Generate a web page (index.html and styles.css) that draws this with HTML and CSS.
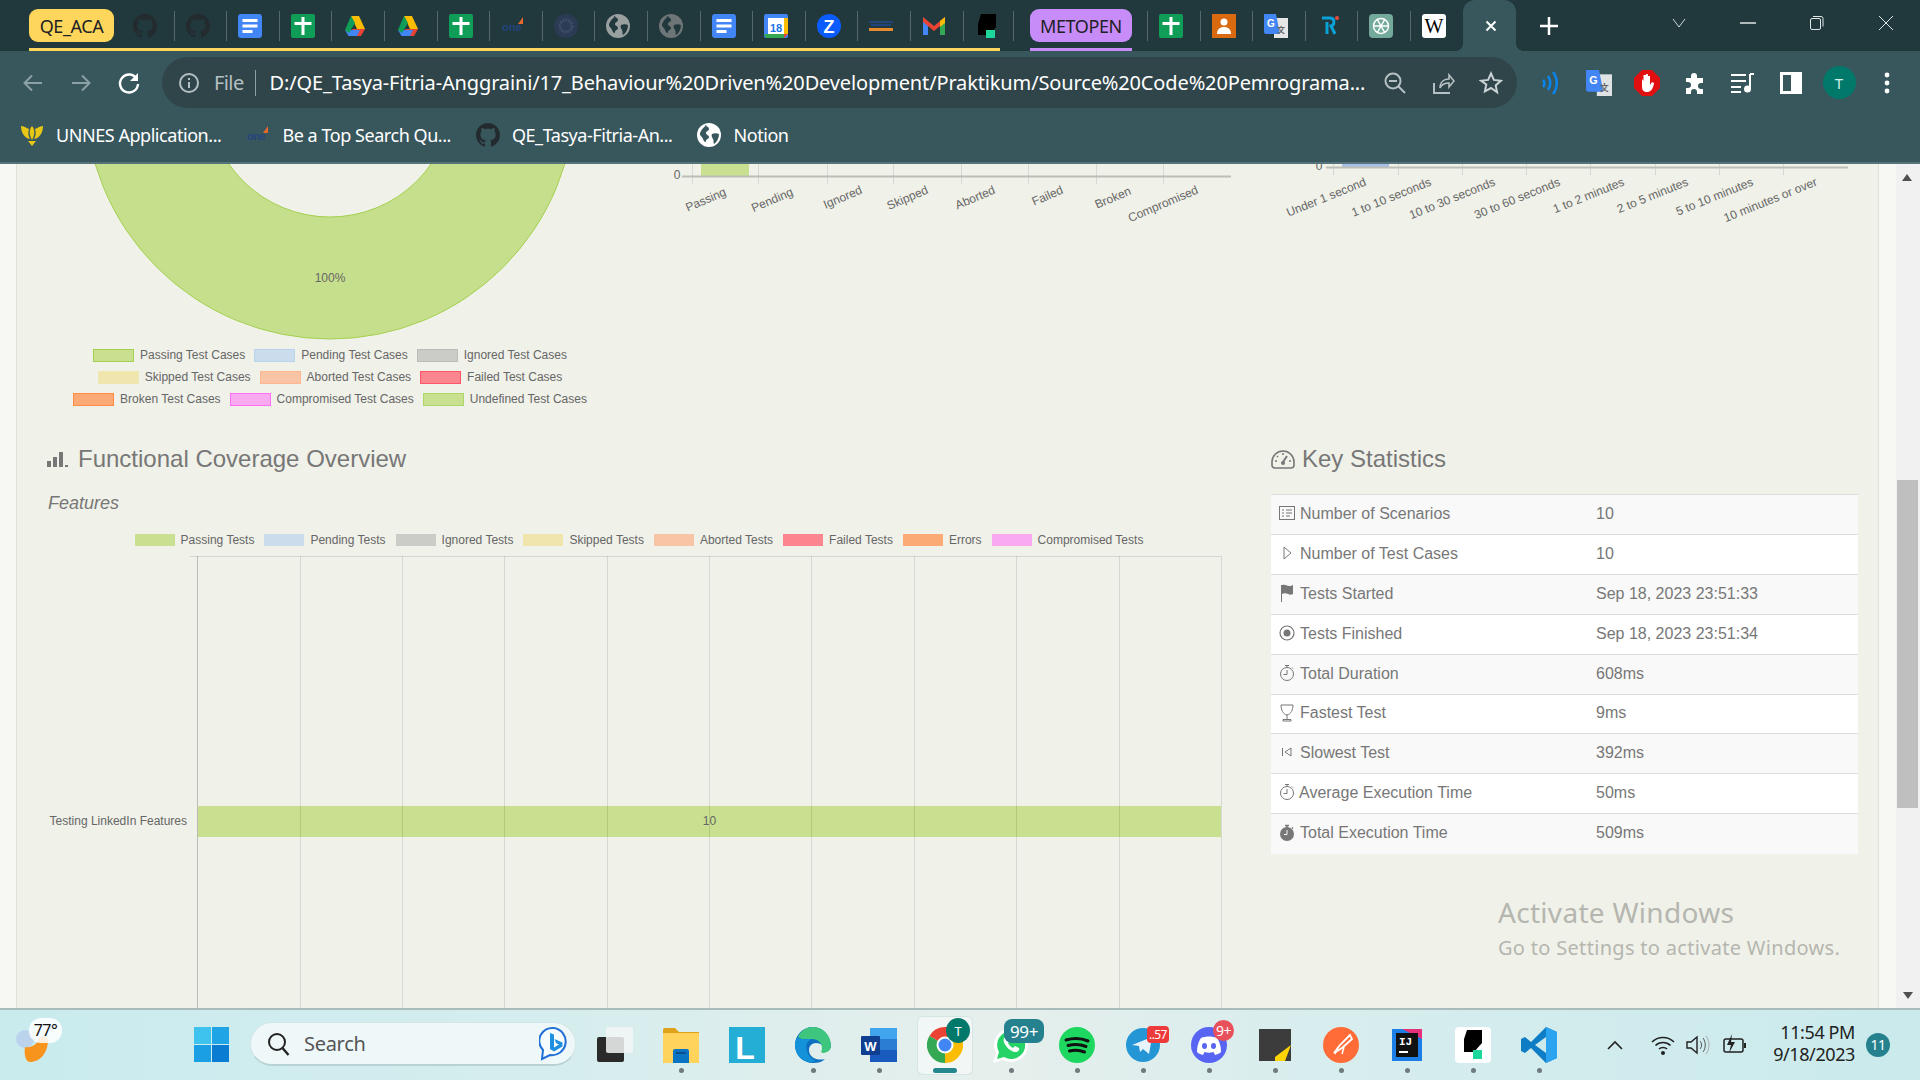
FILE: index.html
```html
<!DOCTYPE html>
<html lang="en">
<head>
<meta charset="utf-8">
<title>Serenity Reports</title>
<link rel="stylesheet" href="styles.css">
</head>
<body>
<svg class="defs" xmlns="http://www.w3.org/2000/svg">
  <symbol id="gh" viewBox="0 0 16 16"><path d="M8 0C3.58 0 0 3.58 0 8c0 3.54 2.29 6.53 5.47 7.59.4.07.55-.17.55-.38 0-.19-.01-.82-.01-1.49-2.01.37-2.53-.49-2.69-.94-.09-.23-.48-.94-.82-1.13-.28-.15-.68-.52-.01-.53.63-.01 1.08.58 1.23.82.72 1.21 1.87.87 2.33.66.07-.52.28-.87.51-1.07-1.78-.2-3.64-.89-3.64-3.95 0-.87.31-1.59.82-2.15-.08-.2-.36-1.02.08-2.12 0 0 .67-.21 2.2.82.64-.18 1.32-.27 2-.27.68 0 1.36.09 2 .27 1.53-1.04 2.2-.82 2.2-.82.44 1.1.16 1.92.08 2.12.51.56.82 1.27.82 2.15 0 3.07-1.87 3.75-3.65 3.95.29.25.54.73.54 1.48 0 1.07-.01 1.93-.01 2.2 0 .21.15.46.55.38A8.013 8.013 0 0016 8c0-4.42-3.58-8-8-8z"/></symbol>
  <symbol id="docs" viewBox="0 0 24 24"><rect width="24" height="24" rx="3" fill="#4285f4"/><rect x="4.500" y="5" width="15" height="3" fill="#fff"/><rect x="4.500" y="10.500" width="15" height="3" fill="#fff"/><rect x="4.500" y="16" width="10" height="3" fill="#fff"/></symbol>
  <symbol id="sheets" viewBox="0 0 24 24"><rect width="24" height="24" rx="2" fill="#0f9d58"/><rect x="10.500" y="3" width="3" height="18" fill="#fff"/><rect x="3.500" y="8" width="17" height="3" fill="#fff"/></symbol>
  <symbol id="drive" viewBox="0 0 24 24"><path d="M8 2h8l6 13h-8z" fill="#fbbc04"/><path d="M22 15l-4 7H6l3.500-7z" fill="#ea4335"/><path d="M2 16l3.500 6H14l3-6z" fill="#4285f4"/><path d="M8 2l4 7-6 10-4-3z" fill="#0f9d58"/></symbol>
  <symbol id="globe" viewBox="0 0 24 24"><circle cx="12" cy="12" r="12" fill="currentColor"/><path d="M7 2.500c3 .5 5 1.500 5 3.500s-3 2-3 4 3 2 3 4-3 2-3 4-2 1-3-2-3-3-3-5 3-7 7-9zM15 11c2-1 5-1 7 0 0 4-2 8-5 10-1-2 0-3-1-5s-2-3-1-5z" fill="var(--cut,#21393d)"/></symbol>
  <symbol id="oneapp" viewBox="0 0 24 24"><text x="1" y="17" class="one-text">one</text><path d="M17 10l5-7v7z" fill="#e8682c"/></symbol>
</svg>

<header class="tabstrip">
  <div class="group yellow">
    <div class="chip chip-yellow">QE_ACA</div>
    <div class="tab tab-first"><svg class="fav gh" width="24" height="24"><use href="#gh"/></svg></div>
    <div class="tab"><svg class="fav gh" width="24" height="24"><use href="#gh"/></svg></div>
    <div class="tab"><svg class="fav" width="24" height="24"><use href="#docs"/></svg></div>
    <div class="tab"><svg class="fav" width="24" height="24"><use href="#sheets"/></svg></div>
    <div class="tab"><svg class="fav" width="24" height="24"><use href="#drive"/></svg></div>
    <div class="tab"><svg class="fav" width="24" height="24"><use href="#drive"/></svg></div>
    <div class="tab"><svg class="fav" width="24" height="24"><use href="#sheets"/></svg></div>
    <div class="tab"><svg class="fav" width="24" height="24"><use href="#oneapp"/></svg></div>
    <div class="tab"><svg class="fav" width="24" height="24" viewBox="0 0 24 24"><circle cx="12" cy="12" r="12" fill="#2c3b54"/><circle cx="12" cy="12" r="6" fill="none" stroke="#3c4d6b" stroke-width="3" stroke-dasharray="2 1"/></svg></div>
    <div class="tab"><svg class="fav globe-a" width="24" height="24"><use href="#globe"/></svg></div>
    <div class="tab"><svg class="fav globe-b" width="24" height="24"><use href="#globe"/></svg></div>
    <div class="tab"><svg class="fav" width="24" height="24"><use href="#docs"/></svg></div>
    <div class="tab"><svg class="fav" width="24" height="24" viewBox="0 0 24 24"><rect width="24" height="24" rx="2" fill="#4285f4"/><rect x="4" y="4" width="16" height="16" fill="#fff"/><path d="M0 20h20v4H2z" fill="#34a853"/><path d="M20 4h4v16h-4z" fill="#fbbc04"/><path d="M20 20h4l-4 4z" fill="#ea4335"/><text x="12" y="17.500" class="cal-text">18</text></svg></div>
    <div class="tab"><svg class="fav" width="24" height="24" viewBox="0 0 24 24"><circle cx="12" cy="12" r="12" fill="#0b5cff"/><text x="12" y="19" class="z-text">Z</text></svg></div>
    <div class="tab"><svg class="fav" width="24" height="24" viewBox="0 0 24 24"><rect x="0" y="7" width="24" height="2" fill="#24447c"/><rect x="2" y="10" width="20" height="2" fill="#24447c"/><rect x="0" y="14" width="24" height="3" fill="#e88b2f"/></svg></div>
    <div class="tab"><svg class="fav" width="24" height="24" viewBox="0 0 24 24"><path d="M1 5v16h5V10z" fill="#4285f4"/><path d="M23 5v16h-5V10z" fill="#34a853"/><path d="M1 3l11 9 11-9v5l-11 9L1 8z" fill="#ea4335"/><path d="M18 7l5-4v6l-5 4z" fill="#fbbc04"/></svg></div>
    <div class="tab tab-last"><svg class="fav" width="24" height="24" viewBox="0 0 24 24"><path d="M6 0h15v13l-6 8H3V10z" fill="#000"/><rect x="11" y="16" width="9" height="8" fill="#1ed79a"/></svg></div>
  </div>
  <div class="tabsep"></div>
  <div class="group purple">
    <div class="chip chip-purple">METOPEN</div>
  </div>
  <div class="tab tab-gap"></div>
  <div class="tab"><svg class="fav" width="24" height="24"><use href="#sheets"/></svg></div>
  <div class="tab"><svg class="fav" width="24" height="24" viewBox="0 0 24 24"><rect width="24" height="24" fill="#d96a10"/><circle cx="12" cy="8" r="3.500" fill="#fff"/><path d="M5 20c0-5 3-7 7-7s7 2 7 7z" fill="#fff"/></svg></div>
  <div class="tab"><svg class="fav" width="24" height="24" viewBox="0 0 24 24"><rect x="10" y="4" width="14" height="20" fill="#e6e6e6"/><path d="M0 0h12l4 20H2a2 2 0 0 1-2-2z" fill="#4285f4"/><text x="7" y="13" class="gt-text">G</text><text x="17" y="19" class="gt2-text">文</text></svg></div>
  <div class="tab"><svg class="fav" width="24" height="24" viewBox="0 0 24 24"><path d="M5 4h8c5 0 5 7 1 8l4 8M10 8v12" fill="none" stroke="#0aa0d8" stroke-width="3"/><circle cx="20" cy="4" r="2" fill="#e84b3c"/></svg></div>
  <div class="tab"><svg class="fav" width="24" height="24" viewBox="0 0 24 24"><rect width="24" height="24" rx="4" fill="#74aa9c"/><g fill="none" stroke="#fff" stroke-width="1.500"><circle cx="12" cy="12" r="7.500"/><path d="M8 5l8 14M16 5L8 19M4.500 12h15"/></g></svg></div>
  <div class="tab tab-none"><svg class="fav" width="24" height="24" viewBox="0 0 24 24"><rect width="24" height="24" rx="3" fill="#fff"/><text x="12" y="19" class="wiki-text">W</text></svg></div>
  <div class="active-tab"><svg width="12" height="12" viewBox="0 0 12 12"><path d="M1.500 1.500l9 9M10.500 1.500l-9 9" stroke="#fff" stroke-width="2"/></svg></div>
  <div class="newtab"><svg width="20" height="20" viewBox="0 0 20 20"><path d="M10 1v18M1 10h18" stroke="#fff" stroke-width="2.500"/></svg></div>
  <div class="winctrls">
    <div class="winctrl"><svg width="14" height="10" viewBox="0 0 14 10"><path d="M1 1l6 8 6-8" fill="none" stroke="#cfd8d9"/></svg></div>
    <div class="winctrl"><svg width="16" height="2" viewBox="0 0 16 2"><path d="M0 1h16" stroke="#dfe6e6" stroke-width="1.500"/></svg></div>
    <div class="winctrl"><svg width="16" height="16" viewBox="0 0 16 16"><rect x="1.500" y="3.500" width="10" height="11" rx="1.500" fill="none" stroke="#dfe6e6"/><path d="M4 1.500h8a2 2 0 0 1 2 2v8" fill="none" stroke="#dfe6e6"/></svg></div>
    <div class="winctrl"><svg width="16" height="16" viewBox="0 0 16 16"><path d="M1 1l14 14M15 1L1 15" stroke="#dfe6e6"/></svg></div>
  </div>
</header>

<nav class="toolbar">
  <div class="navbtn"><svg width="22" height="22" viewBox="0 0 22 22"><path d="M20 11H3M10 3.500L2.500 11l7.500 7.500" fill="none" stroke="#8ca1a5" stroke-width="2"/></svg></div>
  <div class="navbtn"><svg width="22" height="22" viewBox="0 0 22 22"><path d="M2 11h17M12 3.500l7.500 7.500-7.500 7.500" fill="none" stroke="#8ca1a5" stroke-width="2"/></svg></div>
  <div class="navbtn"><svg width="24" height="24" viewBox="0 0 24 24"><path d="M19.500 7.500A9 9 0 1 0 21 13" fill="none" stroke="#fff" stroke-width="2.400"/><path d="M21 2v8h-8z" fill="#fff"/></svg></div>
  <div class="omnibox">
    <svg class="info" width="22" height="22" viewBox="0 0 22 22"><circle cx="11" cy="11" r="9" fill="none" stroke="#b5c0c2" stroke-width="2"/><path d="M10 6h2v2h-2zM10 10h2v6h-2z" fill="#b5c0c2"/></svg>
    <span class="file">File</span>
    <span class="omnisep"></span>
    <span class="url">D:/QE_Tasya-Fitria-Anggraini/17_Behaviour%20Driven%20Development/Praktikum/Source%20Code%20Pemrograma...</span>
    <div class="omniicons">
      <div class="omnibtn"><svg width="24" height="24" viewBox="0 0 24 24"><circle cx="10" cy="10" r="7.500" fill="none" stroke="#b5c0c2" stroke-width="2"/><path d="M6 10h8M15.500 15.500L22 22" stroke="#b5c0c2" stroke-width="2"/></svg></div>
      <div class="omnibtn"><svg width="24" height="24" viewBox="0 0 24 24"><path d="M3 12v10h16" fill="none" stroke="#b5c0c2" stroke-width="2"/><path d="M9 17c0-6 4-9 9-9V4l5 6-5 6v-4c-4 0-7 1-9 5z" fill="none" stroke="#b5c0c2" stroke-width="1.600"/></svg></div>
      <div class="omnibtn"><svg width="24" height="24" viewBox="0 0 24 24"><path d="M12 2.500l2.900 6.400 7 .8-5.200 4.700 1.400 6.900L12 17l-6.100 3.300 1.400-6.900L2.100 9.700l7-.8z" fill="none" stroke="#c9d2d4" stroke-width="2"/></svg></div>
    </div>
  </div>
  <div class="exts">
    <div class="ext"><svg width="24" height="28" viewBox="0 0 24 28"><path d="M4 11c2 2 2 5 0 7M9 7c3 4 3 10 0 14M14 3c5 6 5 16 0 22" fill="none" stroke="#0a84e8" stroke-width="2.600"/></svg></div>
    <div class="ext"><svg width="26" height="26" viewBox="0 0 24 24"><rect x="10" y="4" width="14" height="20" fill="#dfe3e4"/><path d="M0 0h12l4 20H2a2 2 0 0 1-2-2z" fill="#4285f4"/><text x="7" y="13" class="gt-text">G</text><text x="17" y="19" class="gt2-text">文</text></svg></div>
    <div class="ext"><svg width="26" height="26" viewBox="0 0 26 26"><path d="M8 0h10l8 8v10l-8 8H8l-8-8V8z" fill="#e11010"/><path d="M8 9v8c0 3 2 5 5 5s6-2 7-9l-2-1-2 3V6h-2v5V4h-2v7V5H9.500v6z" fill="#fff"/></svg></div>
    <div class="ext"><svg width="24" height="24" viewBox="0 0 24 24"><path d="M3 7h5V5a3 3 0 0 1 6 0v2h6v5h-2a3 3 0 0 0 0 6h2v5h-6v-2a3 3 0 0 0-6 0v2H3v-6h2a3 3 0 0 0 0-6H3z" fill="#fff"/></svg></div>
    <div class="ext"><svg width="24" height="22" viewBox="0 0 24 22"><path d="M0 3h15M0 9h15M0 15h10M0 20h10" stroke="#fff" stroke-width="2"/><path d="M19 2v15" stroke="#fff" stroke-width="2"/><circle cx="16.500" cy="17" r="3.500" fill="#fff"/><path d="M19 2h4" stroke="#fff" stroke-width="2"/></svg></div>
    <div class="ext"><svg width="22" height="22" viewBox="0 0 22 22"><path d="M0 0h22v22H0zM3 3v16h8V3z" fill="#fff" fill-rule="evenodd"/></svg></div>
    <div class="ext"><div class="avatar">T</div></div>
    <div class="ext"><svg width="6" height="22" viewBox="0 0 6 22"><circle cx="3" cy="3" r="2.400" fill="#fff"/><circle cx="3" cy="11" r="2.400" fill="#fff"/><circle cx="3" cy="19" r="2.400" fill="#fff"/></svg></div>
  </div>
</nav>

<nav class="bookmarks">
  <div class="bm"><svg width="24" height="24" viewBox="0 0 24 24"><path d="M12 3c-3 3-3 9 0 14 3-5 3-11 0-14zM9 6C5 4 3 3 1 3c0 6 3 12 9 13-2-3-2-7-1-10zM15 6c4-2 6-3 8-3 0 6-3 12-9 13 2-3 2-7 1-10zM8 18h8l-4 5z" fill="#e6c715"/></svg><span>UNNES Application...</span></div>
  <div class="bm"><svg width="24" height="24" viewBox="0 0 24 24"><use href="#oneapp"/></svg><span>Be a Top Search Qu...</span></div>
  <div class="bm"><svg class="gh" width="24" height="24"><use href="#gh"/></svg><span>QE_Tasya-Fitria-An...</span></div>
  <div class="bm"><svg class="globe-w" width="24" height="24"><use href="#globe"/></svg><span>Notion</span></div>
</nav>

<main class="page">
  <div class="gutter"></div>
  <div class="card">
    <section class="charts-row">
      <div class="donut-col">
        <svg class="chart-svg" width="628" height="176" viewBox="16 164 628 176">
          <circle cx="330" cy="94" r="184" fill="none" stroke="#c6df8c" stroke-width="122"/>
          <circle cx="330" cy="94" r="245" fill="none" stroke="#a4d04f"/>
          <circle cx="330" cy="94" r="123" fill="none" stroke="#a4d04f"/>
          <text x="330" y="282" class="ct ct-mid">100%</text>
        </svg>
        <div class="legend legend-a">
          <div class="lg"><i class="bx passing"></i>Passing Test Cases</div>
          <div class="lg"><i class="bx pending"></i>Pending Test Cases</div>
          <div class="lg"><i class="bx ignored"></i>Ignored Test Cases</div>
        </div>
        <div class="legend legend-b">
          <div class="lg"><i class="bx skipped"></i>Skipped Test Cases</div>
          <div class="lg"><i class="bx aborted"></i>Aborted Test Cases</div>
          <div class="lg"><i class="bx failed"></i>Failed Test Cases</div>
        </div>
        <div class="legend legend-b">
          <div class="lg"><i class="bx broken"></i>Broken Test Cases</div>
          <div class="lg"><i class="bx compromised"></i>Compromised Test Cases</div>
          <div class="lg"><i class="bx undefinedc"></i>Undefined Test Cases</div>
        </div>
      </div>
      <div class="bar-col">
        <svg class="chart-svg" width="618" height="70" viewBox="644 164 618 70">
          <rect x="701" y="164" width="48" height="12" fill="#c8e08f"/>
          <g class="grid">
            <path d="M692.500 164v20M758.500 164v20M827.500 164v20M893.500 164v20M961.500 164v20M1028.500 164v20M1096.500 164v20M1163.500 164v20"/>
          </g>
          <path d="M682 176.500h549" class="axis"/>
          <text x="677" y="179" class="ct ct-mid">0</text>
          <text x="727" y="195" class="ct ct-end" transform="rotate(-23 727 195)">Passing</text>
          <text x="794" y="195" class="ct ct-end" transform="rotate(-23 794 195)">Pending</text>
          <text x="863" y="193" class="ct ct-end" transform="rotate(-23 863 193)">Ignored</text>
          <text x="929" y="193" class="ct ct-end" transform="rotate(-23 929 193)">Skipped</text>
          <text x="996" y="193" class="ct ct-end" transform="rotate(-23 996 193)">Aborted</text>
          <text x="1064" y="193" class="ct ct-end" transform="rotate(-23 1064 193)">Failed</text>
          <text x="1132" y="194" class="ct ct-end" transform="rotate(-23 1132 194)">Broken</text>
          <text x="1199" y="193" class="ct ct-end" transform="rotate(-23 1199 193)">Compromised</text>
        </svg>
      </div>
      <div class="bar-col">
        <svg class="chart-svg" width="617" height="70" viewBox="1262 164 617 70">
          <rect x="1342" y="164" width="47" height="3" fill="#a6c0e8"/>
          <g class="grid">
            <path d="M1333.500 164v11M1398.500 164v11M1462.500 164v11M1526.500 164v11M1590.500 164v11M1655.500 164v11M1719.500 164v11M1783.500 164v11"/>
          </g>
          <path d="M1326 167.500h522" class="axis"/>
          <text x="1319" y="170" class="ct ct-mid">0</text>
          <text x="1367" y="185" class="ct ct-end" transform="rotate(-22 1367 185)">Under 1 second</text>
          <text x="1432" y="185" class="ct ct-end" transform="rotate(-22 1432 185)">1 to 10 seconds</text>
          <text x="1496" y="185" class="ct ct-end" transform="rotate(-22 1496 185)">10 to 30 seconds</text>
          <text x="1561" y="185" class="ct ct-end" transform="rotate(-22 1561 185)">30 to 60 seconds</text>
          <text x="1625" y="185" class="ct ct-end" transform="rotate(-22 1625 185)">1 to 2 minutes</text>
          <text x="1689" y="185" class="ct ct-end" transform="rotate(-22 1689 185)">2 to 5 minutes</text>
          <text x="1754" y="185" class="ct ct-end" transform="rotate(-22 1754 185)">5 to 10 minutes</text>
          <text x="1818" y="185" class="ct ct-end" transform="rotate(-22 1818 185)">10 minutes or over</text>
        </svg>
      </div>
    </section>

    <section class="lower-row">
      <div class="coverage">
        <h2 class="heading coverage-heading">
          <svg width="21" height="16" viewBox="0 0 21 16"><path d="M0 10h4v6H0zM6 6h4v10H6zM12 1h4v15h-4zM18 14h3v2h-3z" fill="#777"/></svg>
          <span>Functional Coverage Overview</span>
        </h2>
        <p class="features">Features</p>
        <div class="legend legend-c">
          <div class="lg"><i class="bs passing-s"></i>Passing Tests</div>
          <div class="lg"><i class="bs pending-s"></i>Pending Tests</div>
          <div class="lg"><i class="bs ignored-s"></i>Ignored Tests</div>
          <div class="lg"><i class="bs skipped-s"></i>Skipped Tests</div>
          <div class="lg"><i class="bs aborted-s"></i>Aborted Tests</div>
          <div class="lg"><i class="bs failed-s"></i>Failed Tests</div>
          <div class="lg"><i class="bs broken-s"></i>Errors</div>
          <div class="lg"><i class="bs compromised-s"></i>Compromised Tests</div>
        </div>
        <svg class="chart-svg hbar" width="1245" height="458" viewBox="16 550 1245 458">
          <rect x="198" y="806" width="1023" height="31" fill="#c8e08f"/>
          <path d="M190 556.500h1031" class="hgrid"/>
          <path d="M197.500 556v452" class="hgrid-strong"/>
          <path d="M300.500 556v452M402.500 556v452M504.500 556v452M607.500 556v452M709.500 556v452M811.500 556v452M914.500 556v452M1016.500 556v452M1119.500 556v452M1221.500 556v452" class="hgrid"/>
          <text x="187" y="825" class="ct ct-end">Testing LinkedIn Features</text>
          <text x="709.500" y="825" class="ct ct-mid">10</text>
        </svg>
      </div>
      <div class="stats">
        <h2 class="heading stats-heading">
          <svg width="24" height="20" viewBox="0 0 24 20"><path d="M4 19h16a3 3 0 0 0 3-3v-3a11 11 0 0 0-22 0v3a3 3 0 0 0 3 3z" fill="none" stroke="#777" stroke-width="1.600"/><path d="M12 13l4-6" stroke="#777" stroke-width="2"/><circle cx="12" cy="14" r="2" fill="#777"/><path d="M12 4v2M6 7l1 1M4 12h2M20 12h-2" stroke="#777" stroke-width="1.500"/></svg>
          <span>Key Statistics</span>
        </h2>
        <table class="stat-table">
          <tr><td class="lbl"><svg width="16" height="14" viewBox="0 0 16 14"><rect x=".5" y=".5" width="15" height="13" fill="none" stroke="#777"/><path d="M3 4h2M3 7h2M3 10h2M7 4h6M7 7h6M7 10h4" stroke="#777"/></svg>Number of Scenarios</td><td>10</td></tr>
          <tr><td class="lbl"><svg width="16" height="16" viewBox="0 0 16 16"><path d="M5 2l7 6-7 6z" fill="none" stroke="#777"/></svg>Number of Test Cases</td><td>10</td></tr>
          <tr><td class="lbl"><svg width="16" height="18" viewBox="0 0 16 18"><path d="M2.500 1v17" stroke="#777"/><path d="M3 1c4-1 5 1 7 1s3-.5 4-1v9c-2 1-3 1-5 0s-4-1-6 0z" fill="#777"/></svg>Tests Started</td><td>Sep 18, 2023 23:51:33</td></tr>
          <tr><td class="lbl"><svg width="16" height="16" viewBox="0 0 16 16"><circle cx="8" cy="8" r="7" fill="none" stroke="#777" stroke-width="1.200"/><circle cx="8" cy="8" r="3.500" fill="#777"/></svg>Tests Finished</td><td>Sep 18, 2023 23:51:34</td></tr>
          <tr><td class="lbl"><svg width="16" height="18" viewBox="0 0 16 18"><circle cx="8" cy="10" r="6.500" fill="none" stroke="#777"/><path d="M6 1.500h4M8 2v2M8 6v4.500H4.500M13 3.500l1 1" fill="none" stroke="#777"/></svg>Total Duration</td><td>608ms</td></tr>
          <tr class="short"><td class="lbl"><svg width="16" height="18" viewBox="0 0 16 18"><path d="M2 1h12c0 5-2 9-6 10C4 10 2 6 2 1zM8 11v4M4 17h8v-1.500H4z" fill="none" stroke="#777"/></svg>Fastest Test</td><td>9ms</td></tr>
          <tr><td class="lbl"><svg width="16" height="12" viewBox="0 0 16 12"><path d="M3.500 2v8M12 2L6 6l6 4z" fill="none" stroke="#777"/></svg>Slowest Test</td><td>392ms</td></tr>
          <tr><td class="lbl lbl-tight"><svg width="16" height="18" viewBox="0 0 16 18"><circle cx="8" cy="10" r="6.500" fill="none" stroke="#777"/><path d="M6 1.500h4M8 2v2M8 6v4.500H4.500M13 3.500l1 1" fill="none" stroke="#777"/></svg>Average Execution Time</td><td>50ms</td></tr>
          <tr><td class="lbl"><svg width="16" height="18" viewBox="0 0 16 18"><circle cx="8" cy="10" r="7" fill="#777"/><path d="M6 1.500h4M8 2v2M13 3.500l1 1" fill="none" stroke="#777" stroke-width="1.500"/><path d="M8 6v4.500H5" fill="none" stroke="#f9f9f9"/></svg>Total Execution Time</td><td>509ms</td></tr>
        </table>
      </div>
    </section>
  </div>
  <div class="strip"></div>
  <aside class="scrollbar">
    <svg class="arrow" width="10" height="7" viewBox="0 0 10 7"><path d="M5 0l5 7H0z" fill="#505050"/></svg>
    <div class="thumb"></div>
    <svg class="arrow arrow-down" width="10" height="7" viewBox="0 0 10 7"><path d="M0 0h10L5 7z" fill="#505050"/></svg>
  </aside>
  <div class="activate">
    <div class="activate-a">Activate Windows</div>
    <div class="activate-b">Go to Settings to activate Windows.</div>
  </div>
</main>

<footer class="taskbar">
  <div class="weather">
    <svg width="34" height="36" viewBox="0 0 34 36"><circle cx="10" cy="12" r="9" fill="#bcd3ee"/><path d="M10 20c6 1 13-2 14-10 4-1 9 0 9 3 0 13-8 22-18 22-5 0-6-9-5-15z" fill="#f7941d"/></svg>
    <span class="temp">77°</span>
  </div>
  <svg class="winlogo" width="35" height="35" viewBox="0 0 35 35"><path d="M0 0h17v17H0z" fill="#3ec3ef"/><path d="M18 0h17v17H18z" fill="#1fa5e6"/><path d="M0 18h17v17H0z" fill="#1a9fe4"/><path d="M18 18h17v17H18z" fill="#0a7dd3"/></svg>
  <div class="search">
    <svg width="24" height="24" viewBox="0 0 24 24"><circle cx="10" cy="10" r="8" fill="none" stroke="#222" stroke-width="2"/><path d="M15.500 16l6 7" stroke="#222" stroke-width="2.400"/></svg>
    <span>Search</span>
    <svg class="bing" width="30" height="36" viewBox="0 0 30 36"><path d="M15 2a13 13 0 0 0-11 22l-1 9 8-4a13 13 0 1 0 4-27z" fill="#f6fcfd" stroke="#1f6fd6" stroke-width="2"/><path d="M11 7l4 1.500v13l5-3-3-1.500-1.500-4 8 3.500v4l-8.500 5-4-2.500z" fill="#1f8fe0"/></svg>
  </div>
  <div class="app"><svg width="36" height="36" viewBox="0 0 36 36"><rect x="0" y="10" width="27" height="25" rx="2" fill="#2a2a2a"/><rect x="9" y="0" width="27" height="26" rx="2" fill="#f3f5f5" fill-opacity=".85"/></svg><i class="dot hidden"></i></div>
  <div class="app"><svg width="36" height="36" viewBox="0 0 36 36"><path d="M0 3a2 2 0 0 1 2-2h10l4 4h20v31H0z" fill="#e0a21b"/><rect y="6" width="36" height="30" rx="1" fill="#ffd35c"/><path d="M10 24a2 2 0 0 1 2-2h12a2 2 0 0 1 2 2v12H10z" fill="#0a74c4"/><rect x="13" y="25" width="10" height="2" fill="#0a4f8a"/></svg><i class="dot"></i></div>
  <div class="app"><svg width="36" height="36" viewBox="0 0 36 36"><rect width="36" height="36" fill="#24aed6"/><text x="16" y="32" class="l-text">L</text></svg><i class="dot hidden"></i></div>
  <div class="app"><svg width="36" height="36" viewBox="0 0 36 36"><path d="M18 0C8 0 0 8 0 18c0 10 8 18 18 18 5 0 9-1 12-4-7 2-16-1-16-9 0-4 3-7 7-7 5 0 7 3 7 5h8C36 9 28 0 18 0z" fill="#0c6fc0"/><path d="M3 10C6 3 12 0 18 0c10 0 18 8 18 19 0 5-5 7-8 7-3 0-1-3-1-5 0-5-4-9-10-9-6 0-11 1-14-2z" fill="#3fc67e"/><path d="M3 10c2 3 8 2 14 2-5 2-7 6-5 12 1 4 4 8 9 10-12 4-21-5-21-16 0-3 1-6 3-8z" fill="#1391d9"/></svg><i class="dot"></i></div>
  <div class="app"><svg width="36" height="36" viewBox="0 0 36 36"><path d="M9 1h27v34H9z" fill="#185abd"/><rect x="9" y="1" width="27" height="11" fill="#41a5ee"/><rect x="9" y="12" width="27" height="11" fill="#2b7cd3"/><rect x="0" y="9" width="19" height="19" rx="1" fill="#103f91"/><text x="9.500" y="23.500" class="w-text">W</text></svg><i class="dot"></i></div>
  <div class="app app-active"><svg width="36" height="36" viewBox="0 0 36 36"><path d="M18 18L2.400 9A18 18 0 0 1 33.600 9z" fill="#ea4335"/><path d="M18 18L33.600 9A18 18 0 0 1 18 36z" fill="#fbbc04"/><path d="M18 18L18 36A18 18 0 0 1 2.400 9z" fill="#34a853"/><circle cx="18" cy="18" r="8.500" fill="#fff"/><circle cx="18" cy="18" r="6.500" fill="#4285f4"/></svg><i class="bar-ind"></i><span class="badge badge-t">T</span></div>
  <div class="app"><svg width="36" height="36" viewBox="0 0 36 36"><path d="M18 1a17 17 0 0 0-15 25L0 36l10-3A17 17 0 1 0 18 1z" fill="#fff"/><path d="M18 4a14 14 0 0 0-12 21L4 32l7-2A14 14 0 1 0 18 4z" fill="#25d366"/><path d="M12 10c-2 2-2 5 1 9s7 6 10 6c2 0 4-2 3-4l-4-2-2 2c-2-1-4-3-5-5l2-2-2-4z" fill="#fff"/></svg><i class="dot"></i><span class="badge badge-wa">99+</span></div>
  <div class="app"><svg width="36" height="36" viewBox="0 0 36 36"><circle cx="18" cy="18" r="18" fill="#1ed760"/><path d="M7 13c7-2 15-2 22 1M9 18.500c6-1.500 12-1.500 18 1M10.500 24c5-1 10-1 15 1" fill="none" stroke="#111" stroke-width="3" stroke-linecap="round"/></svg><i class="dot"></i></div>
  <div class="app"><svg width="36" height="36" viewBox="0 0 36 36"><circle cx="18" cy="18" r="17" fill="#2496d6"/><path d="M7 18l20-8-3 17-6-5-3 3-1-6z" fill="#e8f4fb"/></svg><i class="dot"></i><span class="badge badge-tg">..57</span></div>
  <div class="app"><svg width="36" height="36" viewBox="0 0 36 36"><circle cx="18" cy="18" r="18" fill="#5865f2"/><path d="M10 11c5-2 11-2 16 0 3 4 4 9 4 14-2 2-4 2-6 3l-1.500-3c-3 1-6 1-9 0L12 28c-2-1-4-1-6-3 0-5 1-10 4-14z" fill="#fff"/><ellipse cx="13.500" cy="19" rx="2.500" ry="3" fill="#5865f2"/><ellipse cx="22.500" cy="19" rx="2.500" ry="3" fill="#5865f2"/></svg><i class="dot"></i><span class="badge badge-dc">9+</span></div>
  <div class="app"><svg width="32" height="32" class="sq" viewBox="0 0 32 32"><rect width="32" height="32" fill="#3c3c3c"/><path d="M32 16L26 32H16V28z" fill="#ffd400"/></svg><i class="dot"></i></div>
  <div class="app"><svg width="36" height="36" viewBox="0 0 36 36"><circle cx="18" cy="18" r="18" fill="#ff6c37"/><path d="M27 8l-10 10-6 8 8-5 10-9z" fill="none" stroke="#fff" stroke-width="1.800"/><path d="M12 27l3-7M21 20l-2 7" stroke="#fff" stroke-width="1.500"/></svg><i class="dot"></i></div>
  <div class="app"><svg width="30" height="32" class="sq" viewBox="0 0 30 32"><rect width="30" height="32" fill="#1c7fe8"/><path d="M0 0h30v10L10 0z" fill="#e6317a"/><rect x="4" y="4" width="22" height="24" fill="#111"/><text x="7" y="16" class="ij-text">IJ</text><rect x="7" y="22" width="9" height="2" fill="#fff"/></svg><i class="dot"></i></div>
  <div class="app"><svg width="36" height="36" viewBox="0 0 36 36"><rect width="36" height="36" rx="4" fill="#fff"/><path d="M12 3h15v13l-8 9h-10V12z" fill="#000"/><rect x="18" y="23" width="9" height="9" fill="#1ed79a"/></svg><i class="dot"></i></div>
  <div class="app"><svg width="36" height="36" viewBox="0 0 36 36"><path d="M25 0l11 5v26l-11 5L10 21l-6 5-4-2V12l4-2 6 5z" fill="#0f7dc6"/><path d="M25 0l11 5v26l-11 5z" fill="#2ba3ee"/><path d="M25 10L14 18l11 8z" fill="#cdebed"/></svg><i class="dot"></i></div>
  <div class="tray">
    <div class="tray-i chev"><svg width="16" height="10" viewBox="0 0 16 10"><path d="M1 9l7-7 7 7" fill="none" stroke="#222" stroke-width="1.600"/></svg></div>
    <div class="tray-i wifi"><svg width="24" height="22" viewBox="0 0 24 22"><path d="M1 8c6-6 16-6 22 0M4.500 11.500c4-4 11-4 15 0M8 15c2-2 6-2 8 0" fill="none" stroke="#222" stroke-width="1.600"/><circle cx="12" cy="19" r="2" fill="#222"/></svg></div>
    <div class="tray-i vol"><svg width="24" height="22" viewBox="0 0 24 22"><path d="M1 8v6h4l6 5V3L5 8z" fill="none" stroke="#222" stroke-width="1.400"/><path d="M14 7c2 2 2 6 0 8M17 4c3 4 3 10 0 14" fill="none" stroke="#555"/><path d="M20 2c4 5 4 13 0 18" fill="none" stroke="#aaa"/></svg></div>
    <div class="tray-i batt"><svg width="26" height="24" viewBox="0 0 26 24"><rect x="2" y="6" width="19" height="13" rx="2" fill="none" stroke="#222" stroke-width="1.500"/><rect x="22" y="10" width="2" height="5" fill="#222"/><path d="M10 1L5 12h4l-2 8 6-11H9z" fill="#222"/></svg></div>
    <div class="clock"><div>11:54 PM</div><div>9/18/2023</div></div>
    <div class="notif">11</div>
  </div>
</footer>
</body>
</html>
```

FILE: styles.css
```css
* { box-sizing: border-box; }
html, body { margin: 0; padding: 0; }
body {
  width: 1920px; height: 1080px; overflow: hidden;
  display: flex; flex-direction: column;
  font-family: "Liberation Sans", Arial, sans-serif;
  background: #f0f1e9;
}
.defs { display: none; }
svg { display: block; flex: none; }

/* tab strip */
.tabstrip { height: 51px; background: #21393d; display: flex; padding-left: 29px; font-family: "Noto Sans", sans-serif; flex: none; }
.group { height: 51px; padding-top: 9px; display: flex; align-items: flex-start; flex: none; }
.group.yellow { width: 971px; border-bottom: 3px solid #ffd65c; }
.group.purple { width: 102px; border-bottom: 3px solid #c88cf8; margin-left: 16px; }
.chip { height: 33px; border-radius: 9px; display: flex; align-items: center; justify-content: center; font-size: 18px; color: #202124; flex: none; letter-spacing: -.4px; }
.chip-yellow { width: 85px; background: #ffd65c; }
.chip-purple { width: 102px; background: #c88cf8; }
.tab { width: 52.6px; height: 30px; margin-top: 11px; padding-left: 11px; padding-top: 3px; border-right: 1px solid #55696c; flex: none; }
.group .tab { margin-top: 2px; }
.tab-first { margin-left: 8px; }
.tab-last { width: 36.4px; border-right: 0; }
.tab-gap { width: 16px; padding: 0; }
.tab-none { border-right: 0; width: 52px; }
.tabsep { width: 1px; height: 30px; margin: 11px 0 0 13px; background: #55696c; flex: none; }
.gh { fill: #232b2e; }
.globe-a { color: #9a9fa0; }
.globe-b { color: #6e7576; }
.globe-w { color: #fff; --cut: #38575d; }
.one-text { font: 700 11px "Liberation Sans", sans-serif; fill: #24447c; }
.cal-text { font: 700 11px "Liberation Sans", sans-serif; fill: #1a73e8; text-anchor: middle; }
.z-text { font: 700 18px "Liberation Sans", sans-serif; fill: #fff; text-anchor: middle; }
.gt-text { font: 700 10px "Liberation Sans", sans-serif; fill: #fff; text-anchor: middle; }
.gt2-text { font: 700 8px "Noto Sans CJK SC", sans-serif; fill: #666; text-anchor: middle; }
.wiki-text { font: 400 20px "Liberation Serif", serif; fill: #000; text-anchor: middle; }
.active-tab { width: 53px; height: 51px; background: #38575d; border-radius: 12px 12px 0 0; display: flex; align-items: center; justify-content: center; flex: none; position: relative; padding-left: 4px; }
.active-tab::before, .active-tab::after { content: ""; position: absolute; bottom: 0; width: 8px; height: 8px; }
.active-tab::before { left: -8px; background: radial-gradient(circle at 0 0, transparent 8px, #38575d 8px); }
.active-tab::after { right: -8px; background: radial-gradient(circle at 100% 0, transparent 8px, #38575d 8px); }
.newtab { width: 66px; display: flex; align-items: center; justify-content: center; flex: none; }
.winctrls { margin-left: auto; display: flex; flex: none; }
.winctrl { width: 69px; height: 46px; display: flex; align-items: center; justify-content: center; }

/* toolbar */
.toolbar { height: 59px; background: #38575d; display: flex; padding: 6px 0 2px 9px; flex: none; font-family: "Noto Sans", sans-serif; }
.navbtn { width: 48px; display: flex; align-items: center; justify-content: center; flex: none; }
.omnibox { width: 1355px; margin-left: 9px; background: #304549; border-radius: 26px; display: flex; align-items: center; padding-left: 16px; flex: none; }
.file { margin-left: 14px; font-size: 20px; color: #b5c0c2; letter-spacing: -.6px; }
.omnisep { width: 1px; height: 26px; background: #8ca1a5; margin: 0 14px 0 11px; flex: none; }
.url { font-size: 20px; color: #fff; white-space: nowrap; letter-spacing: -.14px; }
.omniicons { margin-left: auto; display: flex; padding-right: 2px; flex: none; }
.omnibtn { width: 48px; display: flex; align-items: center; justify-content: center; }
.exts { display: flex; margin-left: 10px; flex: none; }
.ext { width: 48px; display: flex; align-items: center; justify-content: center; }
.avatar { width: 33px; height: 33px; border-radius: 50%; background: #00796b; color: #d8efe9; font-size: 15px; display: flex; align-items: center; justify-content: center; }

/* bookmarks */
.bookmarks { height: 54px; background: #38575d; border-bottom: 2px solid #56737a; display: flex; align-items: center; padding: 0 0 3px 20px; gap: 25px; flex: none; font-family: "Noto Sans", sans-serif; }
.bm { display: flex; align-items: center; gap: 12px; color: #fff; font-size: 18px; letter-spacing: -.45px; }

/* page */
.page { height: 844px; display: flex; flex: none; position: relative; overflow: hidden; }
.gutter { width: 16px; background: #f7f8f3; flex: none; }
.card { width: 1863px; background: #f0f1e9; border-left: 1px solid #dfe0d8; border-right: 1px solid #dfe0d8; flex: none; }
.strip { width: 17px; background: #f7f8f3; flex: none; }
.scrollbar { width: 24px; background: #f1f1f1; display: flex; flex-direction: column; align-items: flex-start; flex: none; }
.arrow { margin: 10px 0 0 6px; }
.arrow-down { margin: auto 0 9px 7px; }
.thumb { width: 21px; height: 328px; margin: 299px 0 0 1px; background: #bfbfbf; flex: none; }

.charts-row { display: flex; height: 280px; margin-left: -1px; }
.donut-col { width: 628px; flex: none; }
.bar-col { flex: none; }
.chart-svg text { font-family: "Liberation Sans", sans-serif; }
.ct { font-size: 12px; fill: #666; }
.ct-mid { text-anchor: middle; }
.ct-end { text-anchor: end; }
.grid path { stroke: rgba(0,0,0,.1); fill: none; }
.axis { stroke: #bdbeb6; stroke-width: 2; fill: none; }
.hgrid { stroke: rgba(0,0,0,.1); fill: none; }
.hgrid-strong { stroke: rgba(0,0,0,.22); fill: none; }

.legend { display: flex; justify-content: center; font-size: 12px; color: #666; }
.legend-a { margin-top: 4px; height: 22px; align-items: center; gap: 9px; }
.legend-b { height: 22px; align-items: center; gap: 9px; }
.legend-c { height: 22px; align-items: center; margin-top: 15px; gap: 10px; }
.lg { display: flex; align-items: center; gap: 6px; white-space: nowrap; }
.bx { display: block; width: 41px; height: 13px; border: 1px solid; flex: none; }
.bs { display: block; width: 40px; height: 12px; flex: none; }
.passing { background: #c8e08f; border-color: #a4d04f; }
.pending { background: #cbddec; border-color: #b9d3ec; }
.ignored { background: #cbccc7; border-color: #bdbdb8; }
.skipped { background: #efe5ad; border-color: #f0e8b4; }
.aborted { background: #f9c4a6; border-color: #ffb78f; }
.failed { background: #fc8690; border-color: #ff5568; }
.broken { background: #fbaa75; border-color: #ff8c42; }
.compromised { background: #f9a9f0; border-color: #ff6ef6; }
.undefinedc { background: #c8e08f; border-color: #aed76a; }
.passing-s { background: #c8e08f; }
.pending-s { background: #cbddec; }
.ignored-s { background: #cbccc7; }
.skipped-s { background: #efe5ad; }
.aborted-s { background: #f9c4a6; }
.failed-s { background: #fc8690; }
.broken-s { background: #fbaa75; }
.compromised-s { background: #f9a9f0; }

.lower-row { display: flex; margin-left: -1px; }
.coverage { width: 1246px; flex: none; }
.stats { width: 617px; flex: none; padding-left: 9px; }
.heading { display: flex; align-items: center; margin: 0; height: 30px; font-size: 24px; font-weight: 400; color: #777; }
.coverage-heading { padding-left: 31px; gap: 10px; }
.stats-heading { gap: 7px; padding-left: 0; }
.features { margin: 18px 0 0 32px; height: 22px; line-height: 22px; font-size: 18px; font-style: italic; color: #777; }
.hbar { margin-top: -1px; }

.stat-table { width: 587px; margin-top: 20px; border-collapse: collapse; font-size: 16px; color: #777; }
.stat-table tr { height: 40px; background: #fff; }
.stat-table tr:nth-child(odd) { background: #f9f9f9; }
.stat-table tr.short { height: 39px; }
.stat-table td { padding: 0 0 2px; border-top: 1px solid #ddd; vertical-align: middle; }
.stat-table .lbl { width: 325px; padding-left: 8px; }
.lbl svg { display: inline-block; vertical-align: middle; margin-right: 5px; margin-top: -2px; }
.lbl-tight svg { margin-right: 4px; }

.activate { position: absolute; left: 1498px; top: 729px; font-family: "Noto Sans", sans-serif; color: #b5b6af; white-space: nowrap; }
.activate-a { font-size: 28px; line-height: 38px; letter-spacing: .3px; }
.activate-b { font-size: 20px; line-height: 28px; margin-top: 3px; letter-spacing: .31px; }

/* taskbar */
.taskbar { height: 72px; border-top: 2px solid #a9bcbc; background: linear-gradient(90deg, #c9ebee 0%, #d6edee 30%, #e6efec 52%, #d8edee 68%, #caeaec 100%); display: flex; flex: none; font-family: "Noto Sans", sans-serif; color: #222; }
.weather { width: 194px; padding: 17px 0 0 15px; position: relative; flex: none; }
.temp { position: absolute; left: 29px; top: 8px; width: 33px; height: 25px; border-radius: 12px; background: rgba(255,255,255,.85); font-size: 16px; text-align: center; line-height: 25px; letter-spacing: -.5px; color: #111; }
.winlogo { margin-top: 17px; }
.search { width: 326px; height: 44px; margin: 12px 0 0 21px; border-radius: 22px; background: #eff8f9; border: 1px solid #d2e6e7; border-bottom: 2px solid #b8d2d4; display: flex; align-items: center; padding-left: 16px; font-size: 20px; color: #555; flex: none; letter-spacing: -.3px; }
.search span { margin-left: 13px; }
.bing { margin-left: auto; margin-right: 6px; }
.search + .app { margin-left: 6px; }
.app { width: 66px; padding-top: 17px; display: flex; flex-direction: column; align-items: center; position: relative; flex: none; height: 70px; }
.app .sq { margin: 2px 0; }
.dot { display: block; width: 5px; height: 5px; border-radius: 50%; background: #6e7a7c; margin-top: 5px; flex: none; }
.dot.hidden { visibility: hidden; }
.bar-ind { display: block; width: 24px; height: 5px; border-radius: 3px; background: #26868f; margin-top: 5px; flex: none; }
.app-active::before { content: ""; position: absolute; left: 5px; right: 5px; top: 6px; bottom: 5px; background: rgba(255,255,255,.5); border: 1px solid rgba(210,225,226,.9); border-radius: 6px; }
.app-active svg, .app-active .bar-ind { position: relative; }
.badge { position: absolute; color: #fff; font-family: "Noto Sans", sans-serif; display: flex; align-items: center; justify-content: center; }
.badge-t { left: 34px; top: 8px; width: 24px; height: 25px; border-radius: 50%; background: #00796b; font-size: 13px; }
.badge-wa { left: 26px; top: 9px; width: 40px; height: 24px; border-radius: 8px; background: #26818f; font-size: 17px; letter-spacing: -.4px; }
.badge-tg { left: 37px; top: 16px; width: 22px; height: 17px; border-radius: 4px; background: #ed3b3b; font-size: 12px; letter-spacing: -.6px; }
.badge-dc { left: 37px; top: 10px; width: 21px; height: 21px; border-radius: 50%; background: #e8505b; font-size: 14px; letter-spacing: -.5px; }
.l-text { font: 700 32px "Liberation Sans", sans-serif; fill: #fff; text-anchor: middle; }
.w-text { font: 700 13px "Liberation Sans", sans-serif; fill: #fff; text-anchor: middle; }
.ij-text { font: 700 11px "Liberation Mono", monospace; fill: #fff; }
.tray { flex: 1; display: flex; align-items: center; position: relative; padding-bottom: 1px; }
.tray-i { display: flex; justify-content: center; flex: none; }
.chev { width: 30px; margin-left: 28px; }
.wifi { width: 30px; margin-left: 18px; }
.vol { width: 30px; margin-left: 5px; }
.batt { width: 30px; margin-left: 7px; }
.clock { margin-left: auto; padding-bottom: 3px; text-align: right; font-size: 18px; line-height: 22px; letter-spacing: -.4px; color: #222; }
.notif { width: 24px; height: 24px; margin: 0 30px 0 11px; border-radius: 50%; background: #26818f; color: #fff; font-size: 14px; display: flex; align-items: center; justify-content: center; letter-spacing: -.5px; flex: none; }
```
